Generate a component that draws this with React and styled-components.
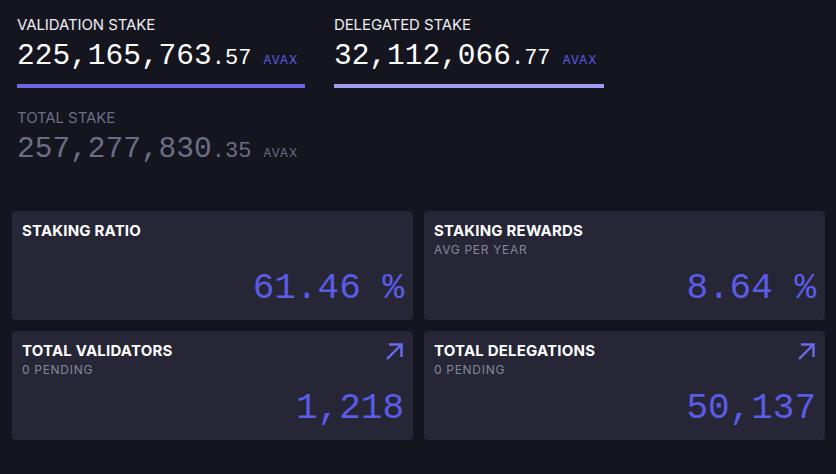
import React from 'react';
import styled, { createGlobalStyle } from 'styled-components';

const GlobalStyle = createGlobalStyle`
  html, body {
    margin: 0;
    padding: 0;
    background: #15151f;
  }
  body {
    font-family: Inter, "Noto Sans", sans-serif;
    color: #f2f2f7;
  }
`;

const Page = styled.div`
  width: 836px;
  height: 474px;
  box-sizing: border-box;
  padding: 15px 11px 0 12px;
  background: #15151f;
`;

const StakeSection = styled.div`
  padding-left: 5px;
  display: flex;
  flex-direction: column;
  gap: 20px;
`;

const StakeRow = styled.div`
  display: flex;
  gap: 29px;
`;

const StakeBlock = styled.div`
  display: flex;
  flex-direction: column;
`;

const Label = styled.div`
  font-size: 15px;
  line-height: 19px;
  letter-spacing: -0.1px;
  color: ${({ muted }) => (muted ? '#6b6e84' : '#eeeef4')};
`;

const Amount = styled.div`
  display: flex;
  align-items: baseline;
  padding-right: 7px;
  margin-top: 6px;
  font-family: "Liberation Mono", "DejaVu Sans Mono", monospace;
  color: ${({ muted }) => (muted ? '#6b6e84' : '#ffffff')};
`;

const Whole = styled.span`
  font-size: 29.5px;
  line-height: 32px;
`;

const Decimal = styled.span`
  font-size: 22px;
`;

const Unit = styled.span`
  font-family: Inter, "Noto Sans", sans-serif;
  font-size: 12px;
  letter-spacing: 0.8px;
  margin-left: 12px;
  color: ${({ muted }) => (muted ? '#6b6e84' : '#5b5ce6')};
`;

const Bar = styled.div`
  height: 4px;
  margin-top: 12px;
  background: ${({ color }) => color};
`;

const CardGrid = styled.div`
  display: grid;
  grid-template-columns: 401px 401px;
  grid-auto-rows: 109px;
  column-gap: 11px;
  row-gap: 11px;
  margin-top: 46px;
`;

const Card = styled.div`
  position: relative;
  display: flex;
  flex-direction: column;
  padding: 10px 9px 11px 10px;
  box-sizing: border-box;
  background: #262637;
  border-radius: 4px;
`;

const CardTitle = styled.div`
  font-weight: 700;
  font-size: 15px;
  line-height: 19px;
  letter-spacing: 0.2px;
  color: #ffffff;
`;

const CardSub = styled.div`
  margin-top: 2px;
  font-size: 12px;
  line-height: 16px;
  letter-spacing: 0.7px;
  color: #858799;
`;

const CardValue = styled.div`
  margin-top: auto;
  text-align: right;
  font-family: "Liberation Mono", "DejaVu Sans Mono", monospace;
  font-size: 36px;
  line-height: 40px;
  color: #5b5ce6;
`;

const LinkIcon = styled.svg`
  position: absolute;
  top: 10px;
  right: 9px;
  width: 20px;
  height: 20px;
`;

const ArrowUpRight = () => (
  <LinkIcon viewBox="0 0 20 20" fill="none" stroke="#6d6bee" strokeWidth="2.4" strokeLinecap="butt">
    <path d="M3 18 L17.5 3.5" />
    <path d="M5 3.5 H17.5 V16" />
  </LinkIcon>
);

const Stake = ({ label, whole, decimal, bar, muted }) => (
  <StakeBlock>
    <Label muted={muted}>{label}</Label>
    <Amount muted={muted}>
      <Whole>{whole}</Whole>
      <Decimal>.{decimal}</Decimal>
      <Unit muted={muted}>AVAX</Unit>
    </Amount>
    {bar && <Bar color={bar} />}
  </StakeBlock>
);

const cards = [
  { title: 'STAKING RATIO', value: '61.46 %' },
  { title: 'STAKING REWARDS', sub: 'AVG PER YEAR', value: '8.64 %' },
  { title: 'TOTAL VALIDATORS', sub: '0 PENDING', value: '1,218', link: true },
  { title: 'TOTAL DELEGATIONS', sub: '0 PENDING', value: '50,137', link: true },
];

const App = () => (
  <Page>
    <GlobalStyle />
    <StakeSection>
      <StakeRow>
        <Stake label="VALIDATION STAKE" whole="225,165,763" decimal="57" bar="#6c67e4" />
        <Stake label="DELEGATED STAKE" whole="32,112,066" decimal="77" bar="#a09cf3" />
      </StakeRow>
      <Stake label="TOTAL STAKE" whole="257,277,830" decimal="35" muted />
    </StakeSection>
    <CardGrid>
      {cards.map((c) => (
        <Card key={c.title}>
          <CardTitle>{c.title}</CardTitle>
          {c.sub && <CardSub>{c.sub}</CardSub>}
          {c.link && <ArrowUpRight />}
          <CardValue>{c.value}</CardValue>
        </Card>
      ))}
    </CardGrid>
  </Page>
);

export default App;
